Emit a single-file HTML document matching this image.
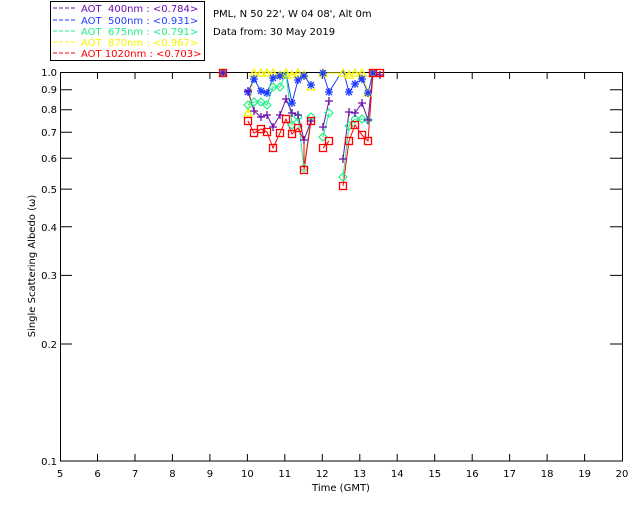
<!DOCTYPE html>
<html><head><meta charset="utf-8"><style>
html,body{margin:0;padding:0;background:#fff;width:640px;height:512px;overflow:hidden}
svg{display:block}
text{font-family:"DejaVu Sans","Liberation Sans",sans-serif;font-size:10px}
</style></head><body>
<svg width="640" height="512" viewBox="0 0 640 512" xmlns="http://www.w3.org/2000/svg">
<defs>
<g id="pl"><path d="M-4 0H4M0 -4V4" stroke="#6a0dad" stroke-width="1.3" fill="none"/></g>
<g id="as"><path d="M-4 0H4M0 -4V4M-3 -3L3 3M-3 3L3 -3" stroke="#1e3cff" stroke-width="1.3" fill="none"/></g>
<g id="di"><path d="M0 -4L4 0L0 4L-4 0Z" stroke="#22ee88" stroke-width="1.2" fill="none"/></g>
<g id="tr"><path d="M0 -4L4 3H-4Z" stroke="#f5f500" stroke-width="1.3" fill="none"/></g>
<g id="sq"><rect x="-3.5" y="-3.5" width="7" height="7" stroke="#ff0000" stroke-width="1.3" fill="none"/></g>
</defs>
<rect x="50.5" y="1.5" width="154" height="59" fill="none" stroke="#000" stroke-width="1"/>
<g stroke-width="1" stroke-dasharray="4,2">
<line x1="53" y1="8" x2="76" y2="8" stroke="#6a0dad"/>
<line x1="53" y1="20" x2="76" y2="20" stroke="#1e3cff"/>
<line x1="53" y1="31" x2="76" y2="31" stroke="#22ee88"/>
<line x1="53" y1="42" x2="76" y2="42" stroke="#f5f500"/>
<line x1="53" y1="53" x2="76" y2="53" stroke="#ff0000"/>
</g>
<text x="81" y="12" fill="#6a0dad" xml:space="preserve">AOT  400nm : &lt;0.784&gt;</text>
<text x="81" y="24" fill="#1e3cff" xml:space="preserve">AOT  500nm : &lt;0.931&gt;</text>
<text x="81" y="35" fill="#22ee88" xml:space="preserve">AOT  675nm : &lt;0.791&gt;</text>
<text x="81" y="46" fill="#f5f500" xml:space="preserve">AOT  870nm : &lt;0.967&gt;</text>
<text x="81" y="57" fill="#ff0000" xml:space="preserve">AOT 1020nm : &lt;0.703&gt;</text>
<text x="213" y="17" fill="#000">PML, N 50 22', W 04 08', Alt 0m</text>
<text x="213" y="35" fill="#000">Data from: 30 May 2019</text>
<rect x="60.5" y="72.5" width="562" height="388.5" fill="none" stroke="#000" stroke-width="1"/>
<g stroke="#000" stroke-width="1">
<path d="M97.5 461v-7M135 461v-7M172.4 461v-7M209.9 461v-7M247.4 461v-7M284.8 461v-7M322.3 461v-7M359.8 461v-7M397.2 461v-7M434.7 461v-7M472.2 461v-7M509.6 461v-7M547.1 461v-7M584.6 461v-7"/>
<path d="M97.5 72v7M135 72v7M172.4 72v7M209.9 72v7M247.4 72v7M284.8 72v7M322.3 72v7M359.8 72v7M397.2 72v7M434.7 72v7M472.2 72v7M509.6 72v7M547.1 72v7M584.6 72v7"/>
<path d="M60 89.8h12M60 109.7h12M60 132.3h12M60 158.3h12M60 189.1h12M60 226.8h12M60 275.4h12M60 344h12"/>
<path d="M622 89.8h-12M622 109.7h-12M622 132.3h-12M622 158.3h-12M622 189.1h-12M622 226.8h-12M622 275.4h-12M622 344h-12"/>
</g>
<g fill="#000" text-anchor="end">
<text x="57" y="76">1.0</text><text x="57" y="93">0.9</text><text x="57" y="113">0.8</text>
<text x="57" y="136">0.7</text><text x="57" y="162">0.6</text><text x="57" y="193">0.5</text>
<text x="57" y="231">0.4</text><text x="57" y="279">0.3</text><text x="57" y="348">0.2</text>
<text x="57" y="465">0.1</text>
</g>
<g fill="#000" text-anchor="middle">
<text x="60" y="477">5</text><text x="97.5" y="477">6</text><text x="135" y="477">7</text><text x="172.4" y="477">8</text>
<text x="209.9" y="477">9</text><text x="247.4" y="477">10</text><text x="284.8" y="477">11</text><text x="322.3" y="477">12</text>
<text x="359.8" y="477">13</text><text x="397.2" y="477">14</text><text x="434.7" y="477">15</text><text x="472.2" y="477">16</text>
<text x="509.6" y="477">17</text><text x="547.1" y="477">18</text><text x="584.6" y="477">19</text><text x="622" y="477">20</text>
<text x="341" y="491">Time (GMT)</text>
<text transform="translate(35,266) rotate(-90)">Single Scattering Albedo (ω)</text>
</g>
<g fill="none" stroke-width="1">
<polyline stroke="#f5f500" points="248,113 254,73 261,73 267,73 273,73 280,75 286,73 292,75 298,73 304,75 311,87"/>
<polyline stroke="#f5f500" points="323,73 343,73 349,75 355,73 362,73 368,93 373,73 380,73"/>
<polyline stroke="#1e3cff" points="248,92 254,79 261,91 267,93 273,78 280,76 286,73 292,103 298,80 304,76 311,85"/>
<polyline stroke="#1e3cff" points="323,73 329,92 343,70 349,92 355,84 362,79 368,93 373,73 380,73"/>
<polyline stroke="#22ee88" points="248,105 254,102 261,102 267,105 273,87 280,87 286,73 292,125 298,117 304,168 311,117"/>
<polyline stroke="#22ee88" points="323,137 329,113"/>
<polyline stroke="#22ee88" points="343,177 349,126 355,119 362,119 368,120 373,73 380,73"/>
<polyline stroke="#6a0dad" points="248,91 254,111 261,117 267,115 273,127 280,115 286,99 292,113 298,115 304,140 311,121"/>
<polyline stroke="#6a0dad" points="323,127 329,101"/>
<polyline stroke="#6a0dad" points="343,159 349,112 355,113 362,103 368,120 373,73 380,75"/>
<polyline stroke="#ff0000" points="248,121 254,133 261,129 267,132 273,148 280,133 286,119 292,134 298,128 304,141 304,170 311,121"/>
<polyline stroke="#ff0000" points="323,148 329,141"/>
<polyline stroke="#ff0000" points="343,186 349,141 355,125 362,135 368,141 373,73 380,73"/>
</g>
<g>
<use href="#tr" x="223" y="73"/><use href="#tr" x="248" y="113"/><use href="#tr" x="254" y="73"/><use href="#tr" x="261" y="73"/><use href="#tr" x="267" y="73"/><use href="#tr" x="273" y="73"/><use href="#tr" x="280" y="75"/><use href="#tr" x="286" y="73"/><use href="#tr" x="292" y="75"/><use href="#tr" x="298" y="73"/><use href="#tr" x="304" y="75"/><use href="#tr" x="311" y="87"/><use href="#tr" x="323" y="73"/><use href="#tr" x="343" y="73"/><use href="#tr" x="349" y="75"/><use href="#tr" x="355" y="73"/><use href="#tr" x="362" y="73"/><use href="#tr" x="368" y="93"/><use href="#tr" x="373" y="73"/>
<use href="#as" x="223" y="73"/><use href="#as" x="248" y="92"/><use href="#as" x="254" y="79"/><use href="#as" x="261" y="91"/><use href="#as" x="267" y="93"/><use href="#as" x="273" y="78"/><use href="#as" x="280" y="76"/><use href="#as" x="292" y="103"/><use href="#as" x="298" y="80"/><use href="#as" x="304" y="76"/><use href="#as" x="311" y="85"/><use href="#as" x="323" y="73"/><use href="#as" x="329" y="92"/><use href="#as" x="349" y="92"/><use href="#as" x="355" y="84"/><use href="#as" x="362" y="79"/><use href="#as" x="368" y="93"/><use href="#as" x="373" y="73"/>
<use href="#di" x="248" y="105"/><use href="#di" x="254" y="102"/><use href="#di" x="261" y="102"/><use href="#di" x="267" y="105"/><use href="#di" x="273" y="87"/><use href="#di" x="280" y="87"/><use href="#di" x="292" y="125"/><use href="#di" x="298" y="117"/><use href="#di" x="304" y="168"/><use href="#di" x="311" y="117"/><use href="#di" x="323" y="137"/><use href="#di" x="329" y="113"/><use href="#di" x="343" y="177"/><use href="#di" x="349" y="126"/><use href="#di" x="355" y="119"/><use href="#di" x="362" y="119"/><use href="#di" x="368" y="120"/>
<use href="#pl" x="223" y="73"/><use href="#pl" x="248" y="91"/><use href="#pl" x="254" y="111"/><use href="#pl" x="261" y="117"/><use href="#pl" x="267" y="115"/><use href="#pl" x="273" y="127"/><use href="#pl" x="280" y="115"/><use href="#pl" x="286" y="99"/><use href="#pl" x="292" y="113"/><use href="#pl" x="298" y="115"/><use href="#pl" x="304" y="140"/><use href="#pl" x="311" y="121"/><use href="#pl" x="323" y="127"/><use href="#pl" x="329" y="101"/><use href="#pl" x="343" y="159"/><use href="#pl" x="349" y="112"/><use href="#pl" x="355" y="113"/><use href="#pl" x="362" y="103"/><use href="#pl" x="368" y="120"/><use href="#pl" x="380" y="75"/>
<use href="#sq" x="223" y="73"/><use href="#sq" x="248" y="121"/><use href="#sq" x="254" y="133"/><use href="#sq" x="261" y="129"/><use href="#sq" x="267" y="132"/><use href="#sq" x="273" y="148"/><use href="#sq" x="280" y="133"/><use href="#sq" x="286" y="119"/><use href="#sq" x="292" y="134"/><use href="#sq" x="298" y="128"/><use href="#sq" x="304" y="170"/><use href="#sq" x="311" y="121"/><use href="#sq" x="323" y="148"/><use href="#sq" x="329" y="141"/><use href="#sq" x="343" y="186"/><use href="#sq" x="349" y="141"/><use href="#sq" x="355" y="125"/><use href="#sq" x="362" y="135"/><use href="#sq" x="368" y="141"/><use href="#sq" x="373" y="73"/><use href="#sq" x="380" y="73"/>
</g>
</svg>
</body></html>
